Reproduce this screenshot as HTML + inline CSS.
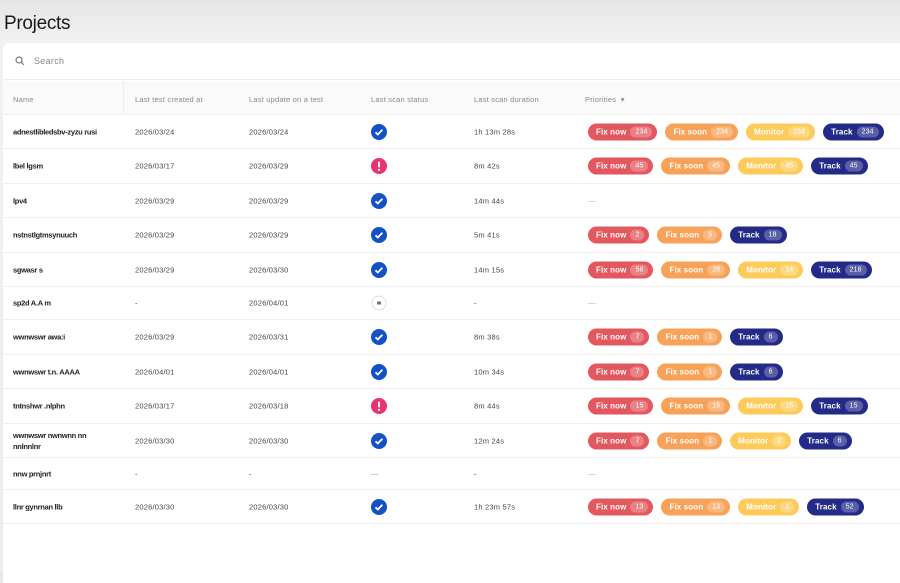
<!DOCTYPE html>
<html><head><meta charset="utf-8"><style>
*{box-sizing:border-box;margin:0;padding:0}
body{width:900px;height:573px;overflow:hidden;background:linear-gradient(#e6e6e6,#f1f1f1 40px,#ececec);font-family:"Liberation Sans",sans-serif;position:relative}
h1{position:absolute;left:4px;top:13px;font-size:19px;font-weight:normal;color:#1a1a1a;letter-spacing:-0.3px}
.card{position:absolute;left:3px;top:43px;width:900px;height:540px;background:#fff;border-radius:6px 0 0 0}
.search{position:absolute;left:0;top:0;width:100%;height:37px;border-bottom:1px solid #eee}
.search span{position:absolute;left:31px;top:13px;font-size:9px;color:#888;letter-spacing:0.3px}
.search svg{position:absolute;left:12px;top:13px}
.hdr{position:absolute;left:0;top:38px;width:100%;height:34px;background:#fafafa;border-bottom:1px solid #eee;font-size:7.5px;color:#888;letter-spacing:0.2px}
.hdr div,.row div.c{position:absolute}
.hdr .div{left:120px;top:0;width:1px;height:34px;background:#eee}
.row{position:absolute;left:0;width:100%;border-bottom:1px solid #f0f0f0;font-size:7.5px;color:#444;letter-spacing:0.2px}
.row div.c{top:50%;transform:translateY(-50%)}
.nm{left:10px;font-weight:bold;color:#222;font-size:7.5px;width:100px;letter-spacing:-0.3px;line-height:11px}
.p{left:585px;display:flex;gap:8px}
.pl{height:17px;border-radius:9px;color:#fff;font-weight:bold;font-size:8px;display:flex;align-items:center;padding:0 5px 0 8px;gap:4px;white-space:nowrap;letter-spacing:0.1px}
.pl b{background:rgba(255,255,255,.25);border-radius:7px;padding:2px 5px;font-size:7px;font-weight:normal}
.r{background:#e2585e}.o{background:#f7a258}.y{background:#fdcb5a}.n{background:#232a88}
</style></head><body>
<h1>Projects</h1>
<div class="card">
<div class="search"><svg width="10" height="10" viewBox="0 0 10 10"><circle cx="4" cy="4" r="3" fill="none" stroke="#777" stroke-width="1.2"/><path d="M6.3 6.3L9 9" stroke="#777" stroke-width="1.2"/></svg><span>Search</span></div>
<div class="hdr">
<div class="div"></div>
<div style="left:10px;top:14px">Name</div>
<div style="left:132px;top:14px">Last test created at</div>
<div style="left:246px;top:14px">Last update on a test</div>
<div style="left:368px;top:14px">Last scan status</div>
<div style="left:471px;top:14px">Last scan duration</div>
<div style="left:582px;top:14px">Priorities &nbsp;▾</div>
</div>
<div id="rows"></div>
</div>
<script>
const er='<svg viewBox="0 0 16 16" width="16" height="16"><circle cx="8" cy="8" r="8" fill="#e8336f"/><rect x="7" y="3.5" width="2" height="6" rx="1" fill="#fff"/><circle cx="8" cy="11.8" r="1.1" fill="#fff"/></svg>';
const okk='<svg viewBox="0 0 16 16" width="16" height="16"><circle cx="8" cy="8" r="8" fill="#1351c9"/><path d="M4.5 8.3l2.3 2.2 4.6-4.8" stroke="#fff" stroke-width="1.8" fill="none"/></svg>';
const pe='<svg viewBox="0 0 16 16" width="16" height="16"><circle cx="8" cy="8" r="7" fill="#fff" stroke="#ddd"/><rect x="6" y="6.5" width="4" height="3" fill="#777"/></svg>';
const D=[
[115,34,"adnestlibledsbv-zyzu rusi","2026/03/24","2026/03/24",okk,"1h 13m 28s",[234,234,234,234]],
[149,35,"lbel lgsm","2026/03/17","2026/03/29",er,"8m 42s",[45,45,45,45]],
[184,34,"lpv4","2026/03/29","2026/03/29",okk,"14m 44s",null],
[218,35,"nstnstlgtmsynuuch","2026/03/29","2026/03/29",okk,"5m 41s",[2,5,null,18]],
[253,34,"sgwasr s","2026/03/29","2026/03/30",okk,"14m 15s",[58,28,14,218]],
[287,33,"sp2d A.A m","-","2026/04/01",pe,"-",null],
[320,35,"wwnwswr awa:i","2026/03/29","2026/03/31",okk,"8m 38s",[7,1,null,6]],
[355,34,"wwnwswr t.n. AAAA","2026/04/01","2026/04/01",okk,"10m 34s",[7,1,null,6]],
[389,35,"tntnshwr .nlphn","2026/03/17","2026/03/18",er,"8m 44s",[15,15,15,15]],
[424,34,"wwnwswr nwnwnn nn nnlnnlnr","2026/03/30","2026/03/30",okk,"12m 24s",[7,1,2,6]],
[458,32,"nnw prnjnrt","-","-","<span style='color:#999'>—</span>","-",null],
[490,34,"llnr gynrnan llb","2026/03/30","2026/03/30",okk,"1h 23m 57s",[13,13,1,52]]];
let h='';
for(const r of D){
 let p='';
 if(r[7]){const L=[["Fix now","r"],["Fix soon","o"],["Monitor","y"],["Track","n"]];
  r[7].forEach((v,i)=>{if(v!==null)p+=`<span class="pl ${L[i][1]}">${L[i][0]}<b>${v}</b></span>`});}
 else p='<span style="color:#aaa">—</span>';
 h+=`<div class="row" style="top:${r[0]}px;height:${r[1]}px">
 <div class="c nm">${r[2]}</div><div class="c" style="left:132px">${r[3]}</div><div class="c" style="left:246px">${r[4]}</div>
 <div class="c" style="left:368px;line-height:0">${r[5]}</div><div class="c" style="left:471px">${r[6]}</div><div class="c p">${p}</div></div>`;
}
document.getElementById('rows').outerHTML='<div style="position:absolute;left:0;top:-43px;width:100%">'+h+'</div>';
</script>
</body></html>
